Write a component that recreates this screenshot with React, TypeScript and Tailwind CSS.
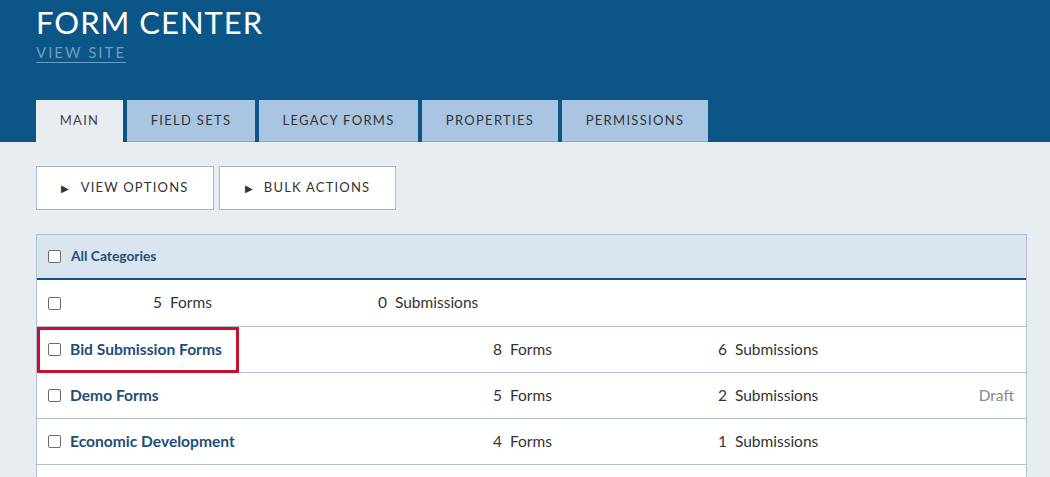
const font = { fontFamily: 'Lato, "Open Sans", sans-serif' }

function Box() {
  return <span className="inline-block w-[13px] h-[13px] border border-[#6b6b6b] rounded-[2px] bg-white shrink-0" />
}

const tabs = [
  { label: 'MAIN', w: 'w-[87px]', active: true },
  { label: 'FIELD SETS', w: 'w-[128px]' },
  { label: 'LEGACY FORMS', w: 'w-[159px]' },
  { label: 'PROPERTIES', w: 'w-[136px]' },
  { label: 'PERMISSIONS', w: 'w-[146px]' },
]

const rows = [
  { name: 'Bid Submission Forms', forms: 8, subs: 6, highlight: true },
  { name: 'Demo Forms', forms: 5, subs: 2, status: 'Draft' },
  { name: 'Economic Development', forms: 4, subs: 1 },
]

export default function App() {
  return (
    <div className="min-h-[477px] bg-[#e8edf2] text-[#333]" style={font}>
      <header className="bg-[#0c5587] px-9 pt-[5px]">
        <h1 className="text-white text-[31px] leading-[35px] tracking-[1px]">FORM CENTER</h1>
        <a className="inline-block text-[#6f9cc4] text-[15px] leading-[17px] tracking-[2px] border-b border-[#6f9cc4] pb-[1px]">
          VIEW SITE
        </a>
        <nav className="flex gap-[4px] mt-[36px]">
          {tabs.map((t) => (
            <div
              key={t.label}
              className={`${t.w} h-[42px] flex items-center justify-center text-[13px] tracking-[1.3px] ${
                t.active ? 'bg-[#e8edf2] text-[#444]' : 'bg-[#a9c5e2] text-[#333] border-b border-[#8aa4bd]'
              }`}
            >
              {t.label}
            </div>
          ))}
        </nav>
      </header>

      <div className="px-9 pt-[24px]">
        <div className="flex gap-[5px]">
          <button className="w-[178px] h-[44px] bg-white border border-[#a9b8c8] text-[13px] tracking-[1.2px] flex items-center justify-center gap-[10px]">
            <span className="text-[10px]">▶</span>VIEW OPTIONS
          </button>
          <button className="w-[177px] h-[44px] bg-white border border-[#a9b8c8] text-[13px] tracking-[1.2px] flex items-center justify-center gap-[10px]">
            <span className="text-[10px]">▶</span>BULK ACTIONS
          </button>
        </div>

        <div className="mt-[24px] w-[991px] border-x border-t border-[#b0c0d2] bg-white">
          <div className="h-[45px] bg-[#dae4ef] border-b-2 border-[#0c5587] flex items-center gap-[10px] pl-[11px]">
            <Box />
            <span className="text-[13.8px] font-bold text-[#1f4e79]">All Categories</span>
          </div>
          <div className="h-[47px] border-b border-[#b0c0d2] flex items-center pl-[11px] text-[15.5px]">
            <Box />
            <span className="ml-[92px] w-[225px]">5&nbsp; Forms</span>
            <span>0&nbsp; Submissions</span>
          </div>
          {rows.map((r) => (
            <div key={r.name} className="relative h-[46px] border-b border-[#b0c0d2] flex items-center pl-[11px] pr-[12px] text-[15.5px]">
              {r.highlight && (
                <div className="absolute left-0 top-0 w-[202px] h-[46px] border-[3px] border-[#c8102e]" />
              )}
              <Box />
              <span className="ml-[9px] w-[423px] font-bold text-[15.6px] text-[#1f4e79]">{r.name}</span>
              <span className="w-[225px]">{r.forms}&nbsp; Forms</span>
              <span className="flex-1">{r.subs}&nbsp; Submissions</span>
              {r.status && <span className="text-[#888]">{r.status}</span>}
            </div>
          ))}
          <div className="h-[20px]" />
        </div>
      </div>
    </div>
  )
}
